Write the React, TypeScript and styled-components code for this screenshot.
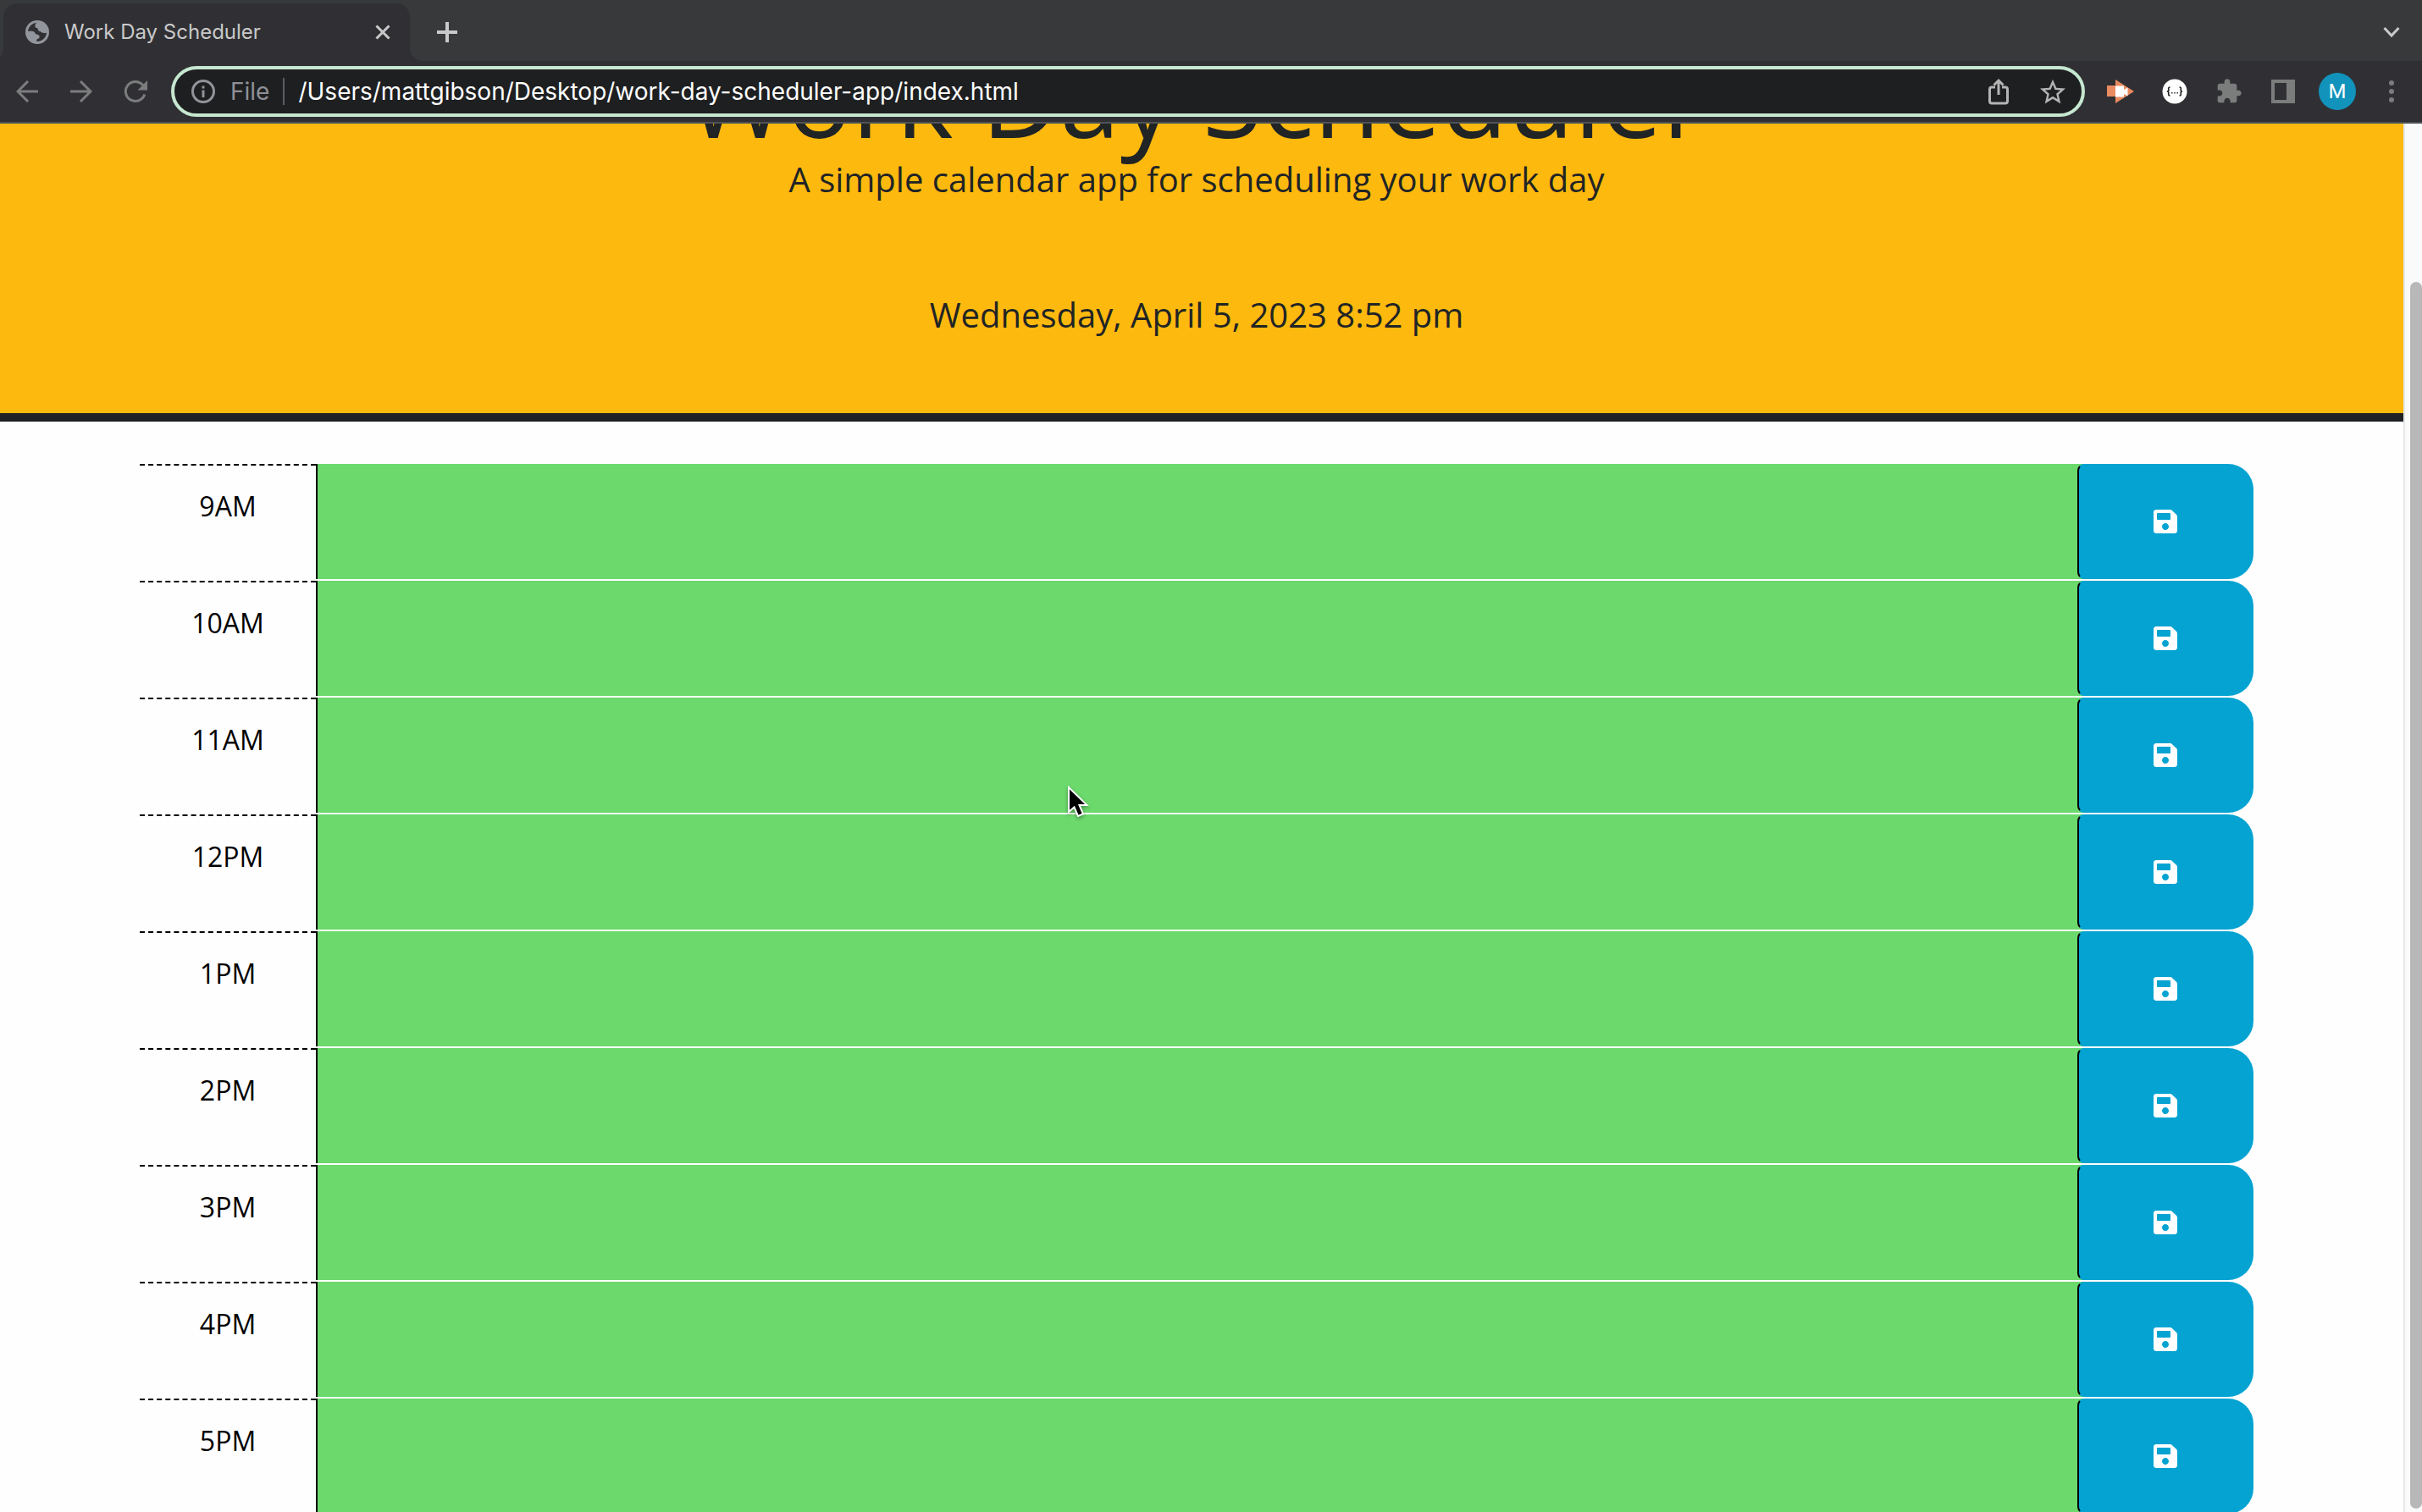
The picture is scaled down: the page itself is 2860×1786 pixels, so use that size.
import React from "react";
import styled, { createGlobalStyle } from "styled-components";
import { FaSave } from "react-icons/fa";

const uiFont = `Inter, Roboto, "Liberation Sans", sans-serif`;
const pageFont = `"Open Sans", "Noto Sans", sans-serif`;

const GlobalStyle = createGlobalStyle`
  *, *::before, *::after { box-sizing: border-box; }
  body { margin: 0; background: #fefefe; overflow: hidden; }
  button, input, textarea { font: inherit; color: inherit; margin: 0; }
`;

const Shell = styled.div`
  position: relative;
  display: flex;
  flex-direction: column;
  height: 100vh;
  overflow: hidden;
  font-family: ${pageFont};
`;

const TabStrip = styled.nav`
  display: flex;
  align-items: flex-end;
  height: 72px;
  padding-left: 4px;
  background: #37393b;
  font-family: ${uiFont};
`;

const Tab = styled.div`
  position: relative;
  display: flex;
  align-items: center;
  width: 480px;
  height: 68px;
  padding: 0 16px 0 26px;
  border-radius: 16px 16px 0 0;
  background: #303034;
  color: #c9c9c9;

  &::before,
  &::after {
    content: "";
    position: absolute;
    bottom: 0;
    width: 16px;
    height: 16px;
  }
  &::before {
    right: 100%;
    background: radial-gradient(circle at 0 0, transparent 16px, #303034 16px);
  }
  &::after {
    left: 100%;
    background: radial-gradient(circle at 100% 0, transparent 16px, #303034 16px);
  }
`;

const TabTitle = styled.span`
  flex: 1;
  margin-left: 18px;
  font-size: 24px;
  line-height: 32px;
  white-space: nowrap;
`;

const IconButton = styled.button<{ $width?: number; $color?: string }>`
  display: flex;
  flex: none;
  align-items: center;
  justify-content: center;
  width: ${(p) => p.$width ?? 64}px;
  height: 64px;
  padding: 0;
  border: 0;
  background: none;
  color: ${(p) => p.$color ?? "#7b7d7d"};
`;

const Spacer = styled.div`
  flex: 1;
`;

const StripButton = styled(IconButton)`
  margin-bottom: 2px;
`;

const NewTabButton = styled(StripButton)`
  margin-left: 12px;
`;

const MenuButton = styled(StripButton)`
  margin-right: 4px;
`;

const Toolbar = styled.div`
  display: flex;
  align-items: center;
  height: 74px;
  padding-right: 4px;
  border-bottom: 2px solid #4d5356;
  background: #303034;
  font-family: ${uiFont};
`;

const AddressBar = styled.form`
  display: flex;
  flex: 1;
  align-items: center;
  height: 60px;
  margin: 0 10px;
  padding: 0 2px 0 20px;
  border: 4px solid #c6e7d0;
  border-radius: 30px;
  background: #1e1f21;
  font-size: 28px;
  line-height: 32px;
`;

const Scheme = styled.label`
  margin-left: 18px;
  padding-right: 16px;
  border-right: 2px solid #5c5d61;
  color: #8f9097;
`;

const AddressInput = styled.input`
  flex: 1;
  min-width: 0;
  height: 40px;
  padding: 0 16px;
  border: 0;
  outline: 0;
  background: none;
  color: #fff;
`;

const Avatar = styled.span`
  display: flex;
  align-items: center;
  justify-content: center;
  width: 44px;
  height: 44px;
  border-radius: 50%;
  background: #1193bb;
  color: #fff;
  font-family: Roboto, sans-serif;
  font-size: 24px;
`;

const Viewport = styled.div`
  display: flex;
  flex: 1;
  min-height: 0;
`;

const Page = styled.div`
  flex: 1;
  overflow: hidden;
  background: #fefefe;
`;

const Header = styled.header`
  margin-top: -96px;
  padding: 0 12px 86px 0;
  border-bottom: 10px solid #202124;
  background: #feb90e;
  color: #212425;
  text-align: center;
`;

const Title = styled.h1`
  margin: 0 0 4px;
  font-size: 128px;
  font-weight: 400;
  line-height: 128px;
`;

const Lead = styled.p`
  margin: 0;
  font-size: 40px;
  line-height: 60px;

  & + & {
    margin-top: 100px;
  }
`;

const Schedule = styled.main`
  padding: 50px 177px 0 165px;
`;

const TimeBlock = styled.section`
  display: grid;
  grid-template-columns: 1fr 10fr 1fr;
  height: 138px;
  padding-bottom: 2px;
`;

const Hour = styled.label`
  padding-top: 24px;
  border-top: 2px dashed #000;
  color: #000;
  font-size: 32px;
  line-height: 48px;
  text-align: center;
`;

const Entry = styled.textarea`
  display: block;
  height: 136px;
  margin-right: -8px;
  padding: 12px 24px;
  border: 0;
  border-left: 2px solid #000;
  outline: 0;
  background: #6bd96c;
  color: #000;
  font-size: 32px;
  resize: none;
`;

const SaveButton = styled.button`
  position: relative;
  display: flex;
  align-items: center;
  justify-content: center;
  height: 136px;
  padding: 0;
  border: 2px solid #04a3d2;
  border-left-color: #000;
  border-radius: 8px 30px 30px 8px;
  background: #04a3d2;
  color: #fff;
  font-size: 32px;
`;

const ScrollTrack = styled.div`
  display: flex;
  flex: none;
  width: 22px;
  padding: 187px 0 4px 6px;
  border-left: 2px solid #e6e8e7;
  background: #fafafa;
`;

const ScrollThumb = styled.div`
  flex: 1;
  border-radius: 8px;
  background: #b8b8b8;
`;

const Pointer = styled.svg`
  position: absolute;
  left: 1260px;
  top: 928px;
  pointer-events: none;
  filter: drop-shadow(0 2px 2px rgba(0, 0, 0, 0.35));
`;

const stroke = {
  fill: "none",
  stroke: "currentColor",
  strokeWidth: 3,
} as const;

const GlobeIcon = () => (
  <svg width="28" height="28" viewBox="17 17 84 84">
    <circle cx="59" cy="59" r="42" fill="#92959c" />
    <path
      d="M26 55C29 37 42 27 57 26Q50 31 51 38Q52 45 60 45Q62 56 70 57Q77 65 92 61C91 78 76 92 58 92Q54 86 60 83Q67 82 67 76Q67 68 58 67Q50 66 50 60Q48 55 40 55Z"
      fill="#303034"
    />
  </svg>
);

const CloseIcon = () => (
  <svg width="18" height="18" viewBox="0 0 18 18" {...stroke}>
    <path d="M1.500 1.500l15 15M16.500 1.500l-15 15" />
  </svg>
);

const PlusIcon = () => (
  <svg width="24" height="24" viewBox="0 0 24 24" {...stroke} strokeWidth={4}>
    <path d="M12 0v24M0 12h24" />
  </svg>
);

const ChevronIcon = () => (
  <svg width="20" height="14" viewBox="0 0 20 14" {...stroke}>
    <path d="M1.500 2L10 11L18.500 2" />
  </svg>
);

const BackIcon = () => (
  <svg width="26" height="26" viewBox="0 0 26 26" {...stroke}>
    <path d="M26 13H2M14 1L2 13l12 12" />
  </svg>
);

const ForwardIcon = () => (
  <svg width="26" height="26" viewBox="0 0 26 26" {...stroke}>
    <path d="M0 13h24M12 1l12 12-12 12" />
  </svg>
);

const ReloadIcon = () => (
  <svg width="28" height="28" viewBox="0 0 28 28" {...stroke}>
    <path d="M24.800 17.500A11.500 11.500 0 1 1 22 5.800l2.500 2.500" />
    <path d="M28 1v11.500H16.500z" fill="currentColor" stroke="none" />
  </svg>
);

const InfoIcon = () => (
  <svg width="28" height="28" viewBox="0 0 28 28" {...stroke}>
    <circle cx="14" cy="14" r="12.500" />
    <path d="M14 12.500v8.500M14 7.500v3" />
  </svg>
);

const ShareIcon = () => (
  <svg width="24" height="32" viewBox="0 0 24 32" {...stroke}>
    <path d="M8 11H4a2.500 2.500 0 0 0-2.500 2.500v14A2.500 2.500 0 0 0 4 30h16a2.500 2.500 0 0 0 2.500-2.500v-14A2.500 2.500 0 0 0 20 11h-4M12 20V3M6.500 8.500L12 3l5.500 5.500" />
  </svg>
);

const StarIcon = () => (
  <svg width="30" height="30" viewBox="0 0 24 24" fill="currentColor">
    <path d="M24 9.240l-8.630-.74L12 .5 8.630 8.510 0 9.240l6.550 5.680L4.580 23.500 12 18.900l7.410 4.600-1.960-8.580L24 9.240zM12 16.670l-4.520 2.730 1.200-5.140-3.990-3.460 5.260-.46L12 5.500l2.060 4.850 5.260.46-3.990 3.460 1.200 5.140L12 16.670z" />
  </svg>
);

const RecorderIcon = () => (
  <svg width="32" height="28" viewBox="0 0 32 28">
    <path d="M0 7h10V0l22 14-22 14v-8H0z" fill="#e98b60" />
    <path d="M10 7.500h10V12l4.500-2.500v10L20 17v3.500H10z" fill="#fff" />
  </svg>
);

const JsonIcon = () => (
  <svg width="30" height="30" viewBox="0 0 30 30">
    <circle cx="15" cy="15" r="14.500" fill="#fff" />
    <g fill="none" stroke="#202124" strokeWidth="1.600">
      <path d="M9.500 10C7 10 7.800 12 7.800 13.300S7 15 6 15c1 0 1.800.5 1.800 1.700S7 20 9.500 20" />
      <path d="M20.500 10c2.500 0 1.700 2 1.700 3.300S23 15 24 15c-1 0-1.800.5-1.800 1.700s.8 3.300-1.700 3.300" />
    </g>
    <path d="M11 16h1.500v1.500H11zM14.200 16h1.500v1.500h-1.500zM17.500 16H19v1.500h-1.500z" fill="#303034" />
  </svg>
);

const PuzzleIcon = () => (
  <svg width="32" height="32" viewBox="0 0 24 24" fill="currentColor">
    <path d="M20.500 11H19V7c0-1.100-.9-2-2-2h-4V3.500C13 2.120 11.880 1 10.500 1S8 2.120 8 3.500V5H4c-1.100 0-1.990.9-1.990 2v3.800H3.500c1.490 0 2.700 1.210 2.700 2.700s-1.210 2.700-2.700 2.700H2V20c0 1.100.9 2 2 2h3.800v-1.500c0-1.490 1.210-2.700 2.700-2.700 1.490 0 2.700 1.210 2.700 2.700V22H17c1.100 0 2-.9 2-2v-4h1.500c1.380 0 2.500-1.120 2.500-2.500S21.880 11 20.500 11z" />
  </svg>
);

const PanelIcon = () => (
  <svg width="28" height="28" viewBox="0 0 28 28" fill="currentColor" fillRule="evenodd">
    <path d="M0 0h28v28H0zM4 4v20h14V4z" />
  </svg>
);

const DotsIcon = () => (
  <svg width="6" height="26" viewBox="0 0 6 26" fill="currentColor">
    <circle cx="3" cy="3" r="3" />
    <circle cx="3" cy="13" r="3" />
    <circle cx="3" cy="23" r="3" />
  </svg>
);

const hours = ["9AM", "10AM", "11AM", "12PM", "1PM", "2PM", "3PM", "4PM", "5PM"];

export default function App() {
  return (
    <Shell>
      <GlobalStyle />
      <TabStrip aria-label="Tabs">
        <Tab>
          <GlobeIcon />
          <TabTitle>Work Day Scheduler</TabTitle>
          <IconButton $width={32} $color="#c9c9c9" aria-label="Close tab">
            <CloseIcon />
          </IconButton>
        </Tab>
        <NewTabButton $color="#c9c9c9" aria-label="New tab">
          <PlusIcon />
        </NewTabButton>
        <Spacer />
        <MenuButton $color="#c9c9c9" aria-label="Search tabs">
          <ChevronIcon />
        </MenuButton>
      </TabStrip>

      <Toolbar>
        <IconButton aria-label="Back"><BackIcon /></IconButton>
        <IconButton aria-label="Forward"><ForwardIcon /></IconButton>
        <IconButton aria-label="Reload"><ReloadIcon /></IconButton>
        <AddressBar>
          <IconButton type="button" $width={28} $color="#92939a" aria-label="Site information">
            <InfoIcon />
          </IconButton>
          <Scheme htmlFor="address">File</Scheme>
          <AddressInput
            id="address"
            type="text"
            defaultValue="/Users/mattgibson/Desktop/work-day-scheduler-app/index.html"
          />
          <IconButton type="button" $color="#b4b4b4" aria-label="Share"><ShareIcon /></IconButton>
          <IconButton type="button" $color="#b4b4b4" aria-label="Bookmark"><StarIcon /></IconButton>
        </AddressBar>
        <IconButton aria-label="Screen recorder"><RecorderIcon /></IconButton>
        <IconButton aria-label="JSON viewer"><JsonIcon /></IconButton>
        <IconButton aria-label="Extensions"><PuzzleIcon /></IconButton>
        <IconButton aria-label="Side panel"><PanelIcon /></IconButton>
        <IconButton aria-label="Profile"><Avatar>M</Avatar></IconButton>
        <IconButton aria-label="Menu"><DotsIcon /></IconButton>
      </Toolbar>

      <Viewport>
        <Page>
          <Header>
            <Title>Work Day Scheduler</Title>
            <Lead>A simple calendar app for scheduling your work day</Lead>
            <Lead>Wednesday, April 5, 2023 8:52 pm</Lead>
          </Header>
          <Schedule>
            {hours.map((hour) => (
              <TimeBlock key={hour}>
                <Hour htmlFor={`entry-${hour}`}>{hour}</Hour>
                <Entry id={`entry-${hour}`} />
                <SaveButton aria-label={`Save ${hour}`}>
                  <FaSave />
                </SaveButton>
              </TimeBlock>
            ))}
          </Schedule>
        </Page>
        <ScrollTrack>
          <ScrollThumb />
        </ScrollTrack>
      </Viewport>

      <Pointer width="28" height="40" viewBox="0 0 28 40" aria-hidden="true">
        <path
          d="M2 2v29l6.500-5.500 4.500 10.500 6-2.500-4.500-10.500h9z"
          fill="#000"
          stroke="#fff"
          strokeWidth="2"
        />
      </Pointer>
    </Shell>
  );
}
